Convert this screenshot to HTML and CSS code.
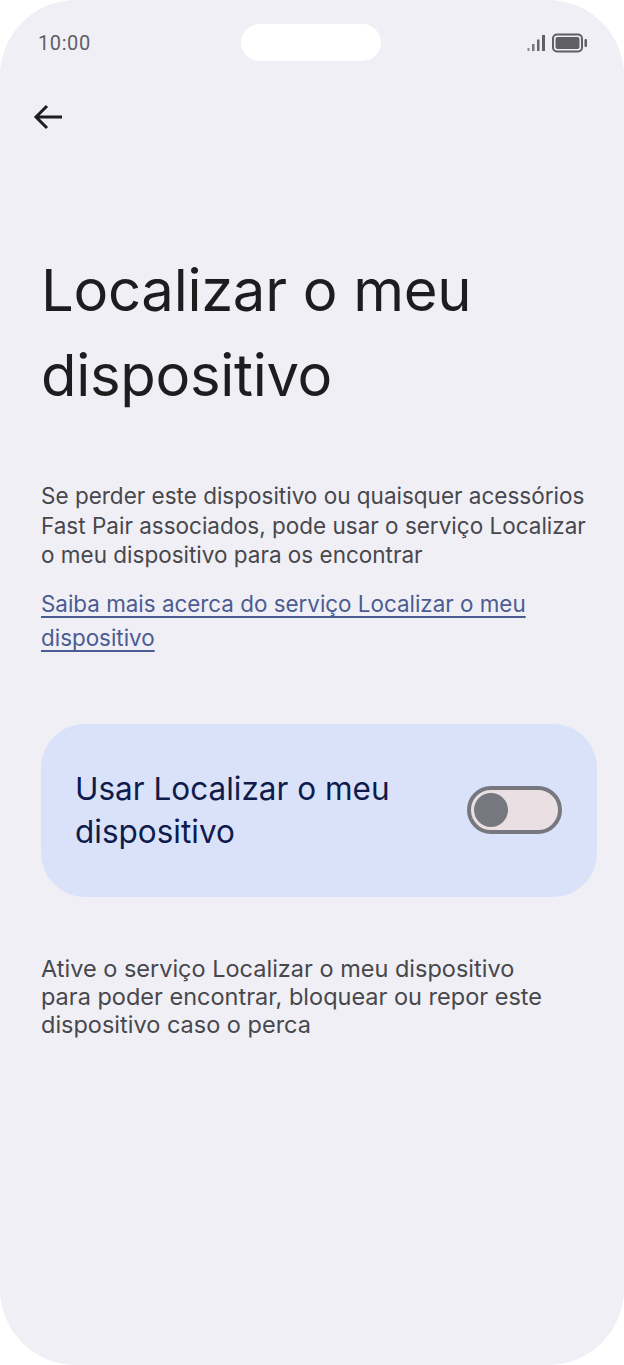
FILE: index.html
```html
<!DOCTYPE html>
<html lang="pt">
<head>
    <meta charset="UTF-8">
    <title>Localizar o meu dispositivo</title>
    <link rel="stylesheet" href="styles.css">
</head>
<body>
    <div class="phone">
        <div class="statusbar">
            <span class="time">10:00</span>
            <div class="notch"></div>
            <div class="status-icons">
                <svg class="signal" width="20" height="18" viewBox="0 0 20 18">
                    <rect x="0.500" y="14" width="2" height="3" fill="#8a8a90"/>
                    <rect x="5" y="10" width="2.500" height="7" fill="#77777c"/>
                    <rect x="10" y="5.500" width="2.500" height="11.500" fill="#66666b"/>
                    <rect x="15" y="1" width="3" height="16" fill="#5f5f64"/>
                </svg>
                <svg class="battery" width="36" height="20" viewBox="0 0 36 20">
                    <rect x="1" y="1.500" width="29" height="17" rx="4" fill="none" stroke="#5f5f64" stroke-width="2"/>
                    <rect x="3.500" y="4" width="24" height="12" rx="2" fill="#5f5f64"/>
                    <rect x="32.500" y="6" width="2.500" height="8" rx="1" fill="#5f5f64"/>
                </svg>
            </div>
        </div>

        <div class="toolbar">
            <svg width="32" height="32" viewBox="0 0 32 32">
                <path d="M30 16 H4 M15 5 L4 16 L15 27" fill="none" stroke="#1d1d20" stroke-width="3"/>
            </svg>
        </div>

        <h1 class="title">Localizar o meu dispositivo</h1>

        <p class="desc">Se perder este dispositivo ou quaisquer acessórios<br>Fast Pair associados, pode usar o serviço Localizar<br>o meu dispositivo para os encontrar</p>
        <a class="learn-more" href="#">Saiba mais acerca do serviço Localizar o meu dispositivo</a>

        <div class="toggle-card">
            <span class="toggle-label">Usar Localizar o meu dispositivo</span>
            <div class="switch"><div class="thumb"></div></div>
        </div>

        <p class="footer-text">Ative o serviço Localizar o meu dispositivo<br>para poder encontrar, bloquear ou repor este<br>dispositivo caso o perca</p>
    </div>
</body>
</html>
```

FILE: styles.css
```css
html, body {
    margin: 0;
    padding: 0;
    background: #fff;
}
body {
    font-family: Inter, Roboto, sans-serif;
}
.phone {
    width: 624px;
    height: 1365px;
    box-sizing: border-box;
    background: #f0eff5;
    border-radius: 76px;
    padding: 0 27px 0 41px;
    overflow: hidden;
}
.statusbar {
    display: grid;
    grid-template-columns: 1fr 140px 1fr;
    align-items: center;
    height: 37px;
    padding: 24px 38px 0 36px;
    margin: 0 -27px 0 -41px;
}
.time {
    font-family: Roboto, sans-serif;
    font-size: 20px;
    letter-spacing: 0.6px;
    color: #5f5f64;
    margin-left: 2px;
}
.notch {
    height: 37px;
    border-radius: 19px;
    background: #fff;
}
.status-icons {
    display: flex;
    align-items: center;
    justify-content: flex-end;
    gap: 5px;
    margin-right: -2px;
}
.toolbar {
    display: flex;
    margin: 40px 0 0 -9px;
    height: 32px;
}
.title {
    margin: 115px 0 0;
    font-size: 58px;
    font-weight: 400;
    line-height: 85px;
    letter-spacing: -0.3px;
    color: #1d1d20;
    width: 500px;
}
.desc {
    margin: 63px 0 0;
    font-size: 22.500px;
    line-height: 29.500px;
    color: #47474c;
}
.learn-more {
    display: block;
    margin-top: 17px;
    font-size: 22.400px;
    line-height: 34px;
    color: #4b5c92;
    text-decoration: underline;
    text-decoration-thickness: 2px;
    text-decoration-skip-ink: none;
    text-underline-offset: 4px;
    width: 500px;
}
.toggle-card {
    display: flex;
    align-items: center;
    justify-content: space-between;
    box-sizing: border-box;
    height: 173px;
    margin-top: 69px;
    padding: 0 35px 0 34px;
    border-radius: 44px;
    background: #dae2fa;
}
.toggle-label {
    font-size: 31.500px;
    line-height: 43px;
    color: #0f1c4b;
    width: 340px;
}
.switch {
    box-sizing: border-box;
    width: 95px;
    height: 48px;
    padding: 3px;
    border: 4px solid #77777f;
    border-radius: 24px;
    background: #eae0e3;
}
.thumb {
    width: 34px;
    height: 34px;
    border-radius: 50%;
    background: #77777f;
}
.footer-text {
    margin: 58px 0 0;
    font-size: 23.500px;
    line-height: 28px;
    color: #47474c;
}
```
